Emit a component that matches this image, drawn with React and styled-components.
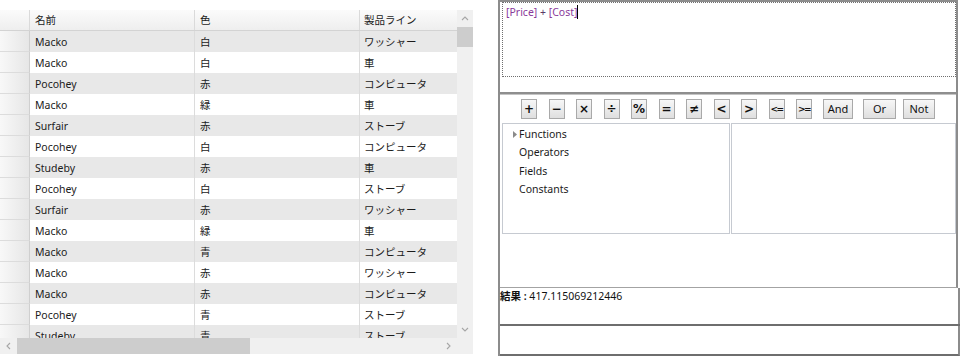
import React from "react";
import styled, { createGlobalStyle } from "styled-components";

const GlobalStyle = createGlobalStyle`
  html, body { margin: 0; padding: 0; background: #ffffff; }
  body {
    font-family: "Noto Sans", "Noto Sans CJK JP", sans-serif;
    font-size: 10.5px;
    color: #1b1b1b;
  }
`;

const Page = styled.div`
  display: flex;
  align-items: flex-start;
  width: 961px;
  height: 358px;
  overflow: hidden;
`;

/* ---------- Left data grid ---------- */
const Grid = styled.div`
  margin-top: 10px;
  width: 473px;
  height: 344px;
  display: grid;
  grid-template-columns: 457px 16px;
  grid-template-rows: 328px 16px;
`;

const Viewport = styled.div`
  overflow: hidden;
`;

const RowBase = styled.div`
  display: grid;
  grid-template-columns: 30px 165px 165px 97px;
  height: 21px;
`;

const HeaderRow = styled(RowBase)`
  background: linear-gradient(#fbfbfb, #eeeeee);
  border-bottom: 1px solid #d3d3d3;
  height: 20px;
`;

const HeaderCell = styled.div`
  line-height: 20px;
  padding-left: ${(p) => p.$pl ?? 5}px;
  border-right: ${(p) => (p.$last ? "none" : "1px solid #dadada")};
  white-space: nowrap;
  overflow: hidden;
`;

const DataRow = styled(RowBase)`
  background: ${(p) => (p.$alt ? "#e8e8e8" : "#ffffff")};
`;

const Gutter = styled.div`
  background: linear-gradient(to right, #f8f8f8, #e6e6e6);
  border-right: 1px solid #cfcfcf;
  border-bottom: 1px solid #dcdcdc;
`;

const Cell = styled.div`
  line-height: 21px;
  padding-top: 1px;
  box-sizing: border-box;
  padding-left: ${(p) => p.$pl ?? 5}px;
  border-right: ${(p) => (p.$last ? "none" : "1px solid #dcdcdc")};
  white-space: nowrap;
  overflow: hidden;
`;

const VScroll = styled.div`
  background: #f0f0f0;
  display: flex;
  flex-direction: column;
`;

const ArrowBox = styled.div`
  height: 17px;
  flex: none;
  display: flex;
  align-items: center;
  justify-content: center;
`;

const VThumb = styled.div`
  height: 20px;
  background: #cdcdcd;
  flex: none;
`;

const Track = styled.div`
  flex: 1;
`;

const HScroll = styled.div`
  background: #f0f0f0;
  display: flex;
  align-items: stretch;
`;

const HArrowBox = styled.div`
  width: 17px;
  flex: none;
  display: flex;
  align-items: center;
  justify-content: center;
`;

const HThumb = styled.div`
  width: 233px;
  background: #cdcdcd;
  flex: none;
`;

const Corner = styled.div`
  background: #f0f0f0;
`;

const Chevron = ({ dir }) => {
  const paths = {
    up: "M1 5 L4 2 L7 5",
    down: "M1 2 L4 5 L7 2",
    left: "M5 1 L2 4 L5 7",
    right: "M2 1 L5 4 L2 7",
  };
  return (
    <svg width="8" height="8" viewBox="0 0 8 8">
      <path d={paths[dir]} fill="none" stroke="#a6a6a6" strokeWidth="1.1" />
    </svg>
  );
};

/* ---------- Right formula editor ---------- */
const Panel = styled.div`
  margin-left: 25px;
  width: 462px;
  height: 356px;
  display: flex;
  flex-direction: column;
  border-left: 2px solid #8c8c8c;
  box-sizing: border-box;
`;

const Editor = styled.div`
  height: 288px;
  flex: none;
  margin-right: 2px;
  border-top: 2px solid #8c8c8c;
  border-right: 2px solid #8c8c8c;
  border-bottom: 1px solid #a3a3a3;
  box-sizing: border-box;
  display: flex;
  flex-direction: column;
`;

const ExprBox = styled.div`
  margin: 0 0 0 2px;
  height: 75px;
  border: 1px dotted #6f6f6f;
  box-sizing: border-box;
  padding: 2px 3px;
  line-height: 14px;
  flex: none;
`;

const Field = styled.span`
  color: #8a3a9a;
`;

const Op = styled.span`
  color: #5a3a66;
`;

const Caret = styled.span`
  display: inline-block;
  width: 1px;
  height: 14px;
  background: #000;
  vertical-align: top;
`;

const Spacer = styled.div`
  height: ${(p) => p.$h}px;
  flex: none;
`;

const Separator = styled.div`
  height: 0;
  border-top: 2px solid #8e8e8e;
  border-bottom: 1px solid #c4c4c4;
  flex: none;
`;

const ButtonRow = styled.div`
  display: flex;
  align-items: flex-start;
  height: 27px;
  padding-top: 4px;
  box-sizing: border-box;
  flex: none;
`;

const OpButton = styled.button`
  width: ${(p) => p.$w}px;
  height: 20px;
  margin: 0 0 0 ${(p) => p.$ml}px;
  padding: 0;
  background: linear-gradient(#f7f7f7, #dfdfdf);
  border: 1px solid #a9a9a9;
  box-sizing: border-box;
  font-family: "DejaVu Sans", "Noto Sans", sans-serif;
  font-size: ${(p) => (p.$word ? "11px" : p.$tight ? "9px" : "12px")};
  font-weight: ${(p) => (p.$word ? 400 : 700)};
  color: #111;
  line-height: 18px;
  letter-spacing: ${(p) => (p.$tight ? "-1.5px" : "0")};
  flex: none;
  ${(p) => p.$word && `font-family: "Noto Sans", sans-serif;`}
`;

const TreeRow = styled.div`
  display: flex;
  gap: 1px;
  margin: 1px 0 0 2px;
  height: 111px;
  flex: none;
`;

const TreeBox = styled.div`
  width: ${(p) => p.$w}px;
  border: 1px solid #c6cad1;
  box-sizing: border-box;
  padding-top: 1px;
`;

const TreeItem = styled.div`
  display: flex;
  align-items: center;
  height: 18.3px;
  padding-left: 10px;
  white-space: nowrap;
`;

const Expander = styled.span`
  width: 6px;
  flex: none;
  display: flex;
  align-items: center;
`;

const Result = styled.div`
  height: 36px;
  flex: none;
  line-height: 15px;
  padding-top: 1px;
  box-sizing: border-box;
  border-right: 2px solid #8c8c8c;
  color: #111;
`;

const Label = styled.span`
  font-weight: 600;
`;

const Divider = styled.div`
  height: 2px;
  background: #6e6e6e;
  flex: none;
`;

const Footer = styled.div`
  flex: 1;
  border-right: 2px solid #8c8c8c;
  border-bottom: 2px solid #6e6e6e;
`;

const rows = [
  ["Macko", "白", "ワッシャー"],
  ["Macko", "白", "車"],
  ["Pocohey", "赤", "コンピュータ"],
  ["Macko", "緑", "車"],
  ["Surfair", "赤", "ストーブ"],
  ["Pocohey", "白", "コンピュータ"],
  ["Studeby", "赤", "車"],
  ["Pocohey", "白", "ストーブ"],
  ["Surfair", "赤", "ワッシャー"],
  ["Macko", "緑", "車"],
  ["Macko", "青", "コンピュータ"],
  ["Macko", "赤", "ワッシャー"],
  ["Macko", "赤", "コンピュータ"],
  ["Pocohey", "青", "ストーブ"],
  ["Studeby", "青", "ストーブ"],
];

const buttons = [
  { t: "+", w: 16, ml: 21 },
  { t: "−", w: 16, ml: 11.5 },
  { t: "×", w: 16, ml: 11.5 },
  { t: "÷", w: 16, ml: 11.5 },
  { t: "%", w: 16, ml: 11.5 },
  { t: "=", w: 16, ml: 11.5 },
  { t: "≠", w: 16, ml: 11.5 },
  { t: "<", w: 16, ml: 11.5 },
  { t: ">", w: 16, ml: 11.5 },
  { t: "<=", w: 16, ml: 11.5, tight: true },
  { t: ">=", w: 16, ml: 11.5, tight: true },
  { t: "And", w: 30, ml: 11, word: true },
  { t: "Or", w: 33, ml: 10, word: true },
  { t: "Not", w: 32, ml: 7, word: true },
];

const treeItems = ["Functions", "Operators", "Fields", "Constants"];

export default function App() {
  return (
    <>
      <GlobalStyle />
      <Page>
        <Grid>
          <Viewport>
            <HeaderRow>
              <HeaderCell />
              <HeaderCell>名前</HeaderCell>
              <HeaderCell>色</HeaderCell>
              <HeaderCell $pl={4} $last>
                製品ライン
              </HeaderCell>
            </HeaderRow>
            {rows.map((r, i) => (
              <DataRow key={i} $alt={i % 2 === 0}>
                <Gutter />
                <Cell>{r[0]}</Cell>
                <Cell>{r[1]}</Cell>
                <Cell $pl={4} $last>
                  {r[2]}
                </Cell>
              </DataRow>
            ))}
          </Viewport>
          <VScroll>
            <ArrowBox>
              <Chevron dir="up" />
            </ArrowBox>
            <VThumb />
            <Track />
            <ArrowBox>
              <Chevron dir="down" />
            </ArrowBox>
          </VScroll>
          <HScroll>
            <HArrowBox>
              <Chevron dir="left" />
            </HArrowBox>
            <HThumb />
            <Track />
            <HArrowBox>
              <Chevron dir="right" />
            </HArrowBox>
          </HScroll>
          <Corner />
        </Grid>

        <Panel>
          <Editor>
            <ExprBox>
              <Field>[Price]</Field> <Op>+</Op> <Field>[Cost]</Field>
              <Caret />
            </ExprBox>
            <Spacer $h={15} />
            <Separator />
            <ButtonRow>
              {buttons.map((b) => (
                <OpButton
                  key={b.t}
                  $w={b.w}
                  $ml={b.ml}
                  $word={b.word}
                  $tight={b.tight}
                >
                  {b.t}
                </OpButton>
              ))}
            </ButtonRow>
            <TreeRow>
              <TreeBox $w={228}>
                {treeItems.map((t, i) => (
                  <TreeItem key={t}>
                    <Expander>
                      {i === 0 && (
                        <svg width="4" height="7" viewBox="0 0 4 7">
                          <path d="M0 0 L4 3.5 L0 7 Z" fill="#8a8a8a" />
                        </svg>
                      )}
                    </Expander>
                    {t}
                  </TreeItem>
                ))}
              </TreeBox>
              <TreeBox $w={226} />
            </TreeRow>
          </Editor>
          <Result>
            <Label>結果 :</Label> 417.115069212446
          </Result>
          <Divider />
          <Footer />
        </Panel>
      </Page>
    </>
  );
}
